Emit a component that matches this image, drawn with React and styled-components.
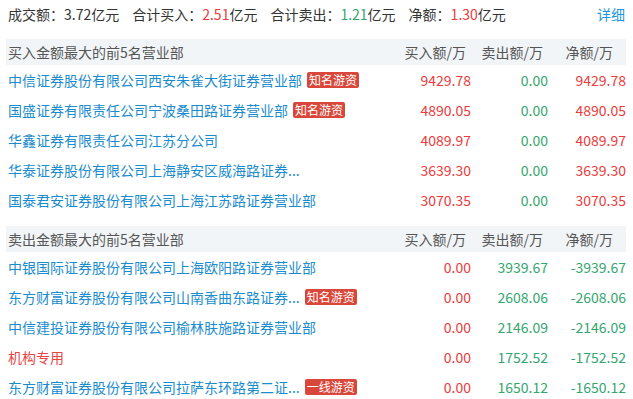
import React from 'react';
import styled, { createGlobalStyle } from 'styled-components';

const GlobalStyle = createGlobalStyle`
  body {
    margin: 0;
    background: #fff;
    font-family: "Microsoft YaHei", "Noto Sans CJK SC", sans-serif;
    font-size: 14px;
  }
`;

const colorOf = {
  red: '#ea3c3c',
  green: '#33a66e',
  plain: '#333',
};

const Page = styled.div`
  width: 633px;
  padding: 0 7px 0 6px;
  box-sizing: border-box;
`;

const Summary = styled.div`
  display: flex;
  align-items: center;
  height: 29px;
  padding: 0 1px 0 2px;
  color: #333;
  line-height: 29px;
`;

const SummaryItem = styled.span`
  margin-right: 13px;
`;

const Num = styled.span`
  color: ${({ tone }) => colorOf[tone] || colorOf.plain};
`;

const Detail = styled.a`
  margin-left: auto;
  color: #1a96dd;
  text-decoration: none;
  cursor: pointer;
`;

const Section = styled.div`
  margin-top: ${({ first }) => (first ? '10px' : '11px')};
`;

const HeadRow = styled.div`
  display: flex;
  align-items: center;
  height: 26px;
  background: #f2f5f8;
  color: #555;
`;

const Row = styled.div`
  display: flex;
  align-items: center;
  height: 30px;
`;

const NameCell = styled.div`
  flex: 1;
  display: flex;
  align-items: center;
  padding-left: 2px;
  white-space: nowrap;
  overflow: hidden;
`;

const Name = styled.a`
  color: ${({ inst }) => (inst ? '#e84545' : '#1b8ccd')};
  text-decoration: none;
  cursor: pointer;
`;

const Badge = styled.span`
  display: inline-block;
  margin-left: 5px;
  padding: 0 2px;
  height: 16px;
  line-height: 16px;
  font-size: 12px;
  color: #fff;
  background: #d9473b;
  border-radius: 2px;
`;

const Cell = styled.div`
  width: ${({ w }) => w}px;
  text-align: right;
  padding-right: ${({ pr }) => pr || 0}px;
  box-sizing: border-box;
  color: ${({ tone }) => colorOf[tone] || '#555'};
`;

const COLS = [
  { key: 'buy', w: 80, pr: 5, label: '买入额/万' },
  { key: 'sell', w: 77, pr: 5, label: '卖出额/万' },
  { key: 'net', w: 78, pr: 13, label: '净额/万' },
];
const VALUE_W = [80, 77, 78];

const buyList = [
  { name: '中信证券股份有限公司西安朱雀大街证券营业部', tag: '知名游资', buy: '9429.78', sell: '0.00', net: '9429.78' },
  { name: '国盛证券有限责任公司宁波桑田路证券营业部', tag: '知名游资', buy: '4890.05', sell: '0.00', net: '4890.05' },
  { name: '华鑫证券有限责任公司江苏分公司', buy: '4089.97', sell: '0.00', net: '4089.97' },
  { name: '华泰证券股份有限公司上海静安区威海路证券...', buy: '3639.30', sell: '0.00', net: '3639.30' },
  { name: '国泰君安证券股份有限公司上海江苏路证券营业部', buy: '3070.35', sell: '0.00', net: '3070.35' },
];

const sellList = [
  { name: '中银国际证券股份有限公司上海欧阳路证券营业部', buy: '0.00', sell: '3939.67', net: '-3939.67' },
  { name: '东方财富证券股份有限公司山南香曲东路证券...', tag: '知名游资', buy: '0.00', sell: '2608.06', net: '-2608.06' },
  { name: '中信建投证券股份有限公司榆林肤施路证券营业部', buy: '0.00', sell: '2146.09', net: '-2146.09' },
  { name: '机构专用', inst: true, buy: '0.00', sell: '1752.52', net: '-1752.52' },
  { name: '东方财富证券股份有限公司拉萨东环路第二证...', tag: '一线游资', buy: '0.00', sell: '1650.12', net: '-1650.12' },
];

const toneFor = (key, value) => {
  if (key === 'buy') return value === '0.00' ? 'red' : 'red';
  if (key === 'sell') return 'green';
  return value.startsWith('-') ? 'green' : 'red';
};

const Table = ({ title, rows, first }) => (
  <Section first={first}>
    <HeadRow>
      <NameCell>{title}</NameCell>
      {COLS.map((c) => (
        <Cell key={c.key} w={c.w} pr={c.pr}>
          {c.label}
        </Cell>
      ))}
    </HeadRow>
    {rows.map((r) => (
      <Row key={r.name}>
        <NameCell>
          <Name inst={r.inst}>{r.name}</Name>
          {r.tag && <Badge>{r.tag}</Badge>}
        </NameCell>
        {COLS.map((c, i) => (
          <Cell key={c.key} w={VALUE_W[i]} tone={toneFor(c.key, r[c.key])}>
            {r[c.key]}
          </Cell>
        ))}
      </Row>
    ))}
  </Section>
);

const App = () => {
  return (
    <Page>
      <GlobalStyle />
      <Summary>
        <SummaryItem>
          成交额：<Num>3.72</Num>亿元
        </SummaryItem>
        <SummaryItem>
          合计买入：<Num tone='red'>2.51</Num>亿元
        </SummaryItem>
        <SummaryItem>
          合计卖出：<Num tone='green'>1.21</Num>亿元
        </SummaryItem>
        <SummaryItem>
          净额：<Num tone='red'>1.30</Num>亿元
        </SummaryItem>
        <Detail>详细</Detail>
      </Summary>
      <Table first title='买入金额最大的前5名营业部' rows={buyList} />
      <Table title='卖出金额最大的前5名营业部' rows={sellList} />
    </Page>
  );
};

export default App;
